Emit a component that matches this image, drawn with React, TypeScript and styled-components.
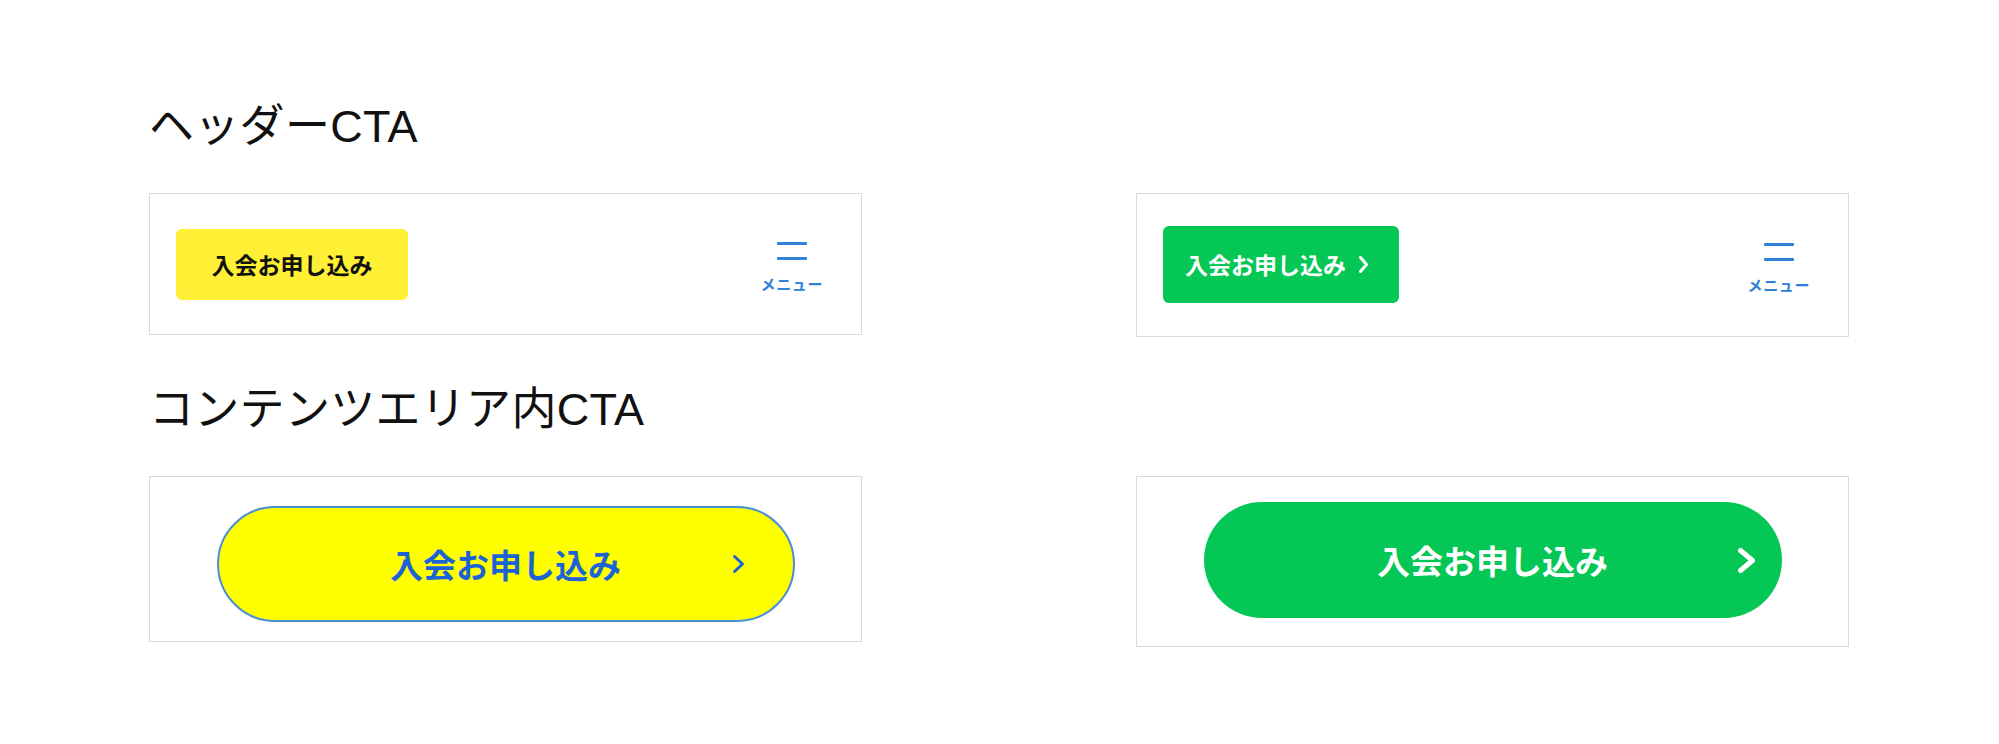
import React from "react";
import styled, { createGlobalStyle } from "styled-components";

const GlobalStyle = createGlobalStyle`
  html, body {
    margin: 0;
    padding: 0;
    background: #ffffff;
  }
  body {
    font-family: "Liberation Sans", "Noto Sans CJK JP", sans-serif;
    color: #111111;
  }
`;

const Page = styled.div`
  padding: 104px 0 0 149px;
  display: flex;
  flex-direction: column;
  gap: 50px;
`;

const Section = styled.section`
  display: flex;
  flex-direction: column;
`;

const Title = styled.h2`
  margin: 0 0 44px;
  font-family: "Liberation Sans", "Noto Sans CJK JP", sans-serif;
  font-weight: 400;
  font-size: 45px;
  line-height: 45px;
  letter-spacing: 0.3px;
  color: #111111;
`;

const Row = styled.div`
  display: grid;
  grid-template-columns: 713px 713px;
  column-gap: 274px;
  align-items: start;
`;

const HeaderBox = styled.div<{ $h: number }>`
  box-sizing: border-box;
  height: ${(p) => p.$h}px;
  border: 1px solid #dadada;
  background: #fff;
  display: flex;
  align-items: center;
  justify-content: space-between;
  padding: 0 38px 0 26px;
`;

const ContentBox = styled.div<{ $h: number; $pt: number }>`
  box-sizing: border-box;
  height: ${(p) => p.$h}px;
  border: 1px solid #dadada;
  background: #fff;
  display: flex;
  justify-content: center;
  align-items: flex-start;
  padding-top: ${(p) => p.$pt}px;
`;

const HeaderButton = styled.a<{ $variant: "yellow" | "green" }>`
  box-sizing: border-box;
  display: flex;
  align-items: center;
  justify-content: center;
  gap: 12px;
  width: ${(p) => (p.$variant === "yellow" ? 232 : 236)}px;
  height: ${(p) => (p.$variant === "yellow" ? 71 : 77)}px;
  padding-right: ${(p) => (p.$variant === "green" ? 8 : 0)}px;
  border-radius: 6px;
  background: ${(p) => (p.$variant === "yellow" ? "#ffef35" : "#05c755")};
  color: ${(p) => (p.$variant === "yellow" ? "#111111" : "#ffffff")};
  font-family: "Noto Sans CJK JP", sans-serif;
  font-weight: 700;
  font-size: 23px;
  line-height: 1;
  text-decoration: none;
  margin-top: ${(p) => (p.$variant === "green" ? -2 : 0)}px;
`;

const Menu = styled.div`
  display: flex;
  flex-direction: column;
  align-items: center;
  margin-top: 5px;
  color: #2f80d8;
`;

const Burger = styled.div`
  display: flex;
  flex-direction: column;
  gap: 12px;
  margin-bottom: 16px;
`;

const BurgerLine = styled.span`
  display: block;
  width: 30px;
  height: 3px;
  border-radius: 1px;
  background: #2f80d8;
`;

const MenuLabel = styled.span`
  font-family: "Noto Sans CJK JP", sans-serif;
  font-weight: 700;
  font-size: 15px;
  line-height: 15px;
  letter-spacing: 0.6px;
  color: #2f80d8;
`;

const Pill = styled.a<{ $variant: "yellow" | "green" }>`
  box-sizing: border-box;
  width: 578px;
  height: 116px;
  border-radius: 58px;
  display: grid;
  grid-template-columns: 1fr auto 1fr;
  align-items: center;
  background: ${(p) => (p.$variant === "yellow" ? "#ffff00" : "#05c755")};
  border: ${(p) => (p.$variant === "yellow" ? "2px solid #4a8fd6" : "none")};
  color: ${(p) => (p.$variant === "yellow" ? "#1b63d6" : "#ffffff")};
  font-family: "Noto Sans CJK JP", sans-serif;
  font-weight: 700;
  font-size: 33px;
  line-height: 1;
  text-decoration: none;
`;

const PillText = styled.span`
  grid-column: 2;
`;

const PillArrow = styled.span<{ $right: number }>`
  grid-column: 3;
  justify-self: end;
  display: flex;
  margin-right: ${(p) => p.$right}px;
`;

const Chevron = ({
  w,
  h,
  sw,
  color,
}: {
  w: number;
  h: number;
  sw: number;
  color: string;
}) => (
  <svg width={w} height={h} viewBox={`0 0 ${w} ${h}`} fill="none">
    <polyline
      points={`${sw / 2 + 1},${sw / 2 + 1} ${w - sw / 2 - 1},${h / 2} ${sw / 2 + 1},${h - sw / 2 - 1}`}
      stroke={color}
      strokeWidth={sw}
      strokeLinecap="round"
      strokeLinejoin="round"
    />
  </svg>
);

const MenuIcon = () => (
  <Menu>
    <Burger>
      <BurgerLine />
      <BurgerLine />
    </Burger>
    <MenuLabel>メニュー</MenuLabel>
  </Menu>
);

export default function App() {
  return (
    <>
      <GlobalStyle />
      <Page>
        <Section>
          <Title>ヘッダーCTA</Title>
          <Row>
            <HeaderBox $h={142}>
              <HeaderButton $variant="yellow">入会お申し込み</HeaderButton>
              <MenuIcon />
            </HeaderBox>
            <HeaderBox $h={144}>
              <HeaderButton $variant="green">
                入会お申し込み
                <Chevron w={11} h={19} sw={3} color="#ffffff" />
              </HeaderButton>
              <MenuIcon />
            </HeaderBox>
          </Row>
        </Section>
        <Section>
          <Title>コンテンツエリア内CTA</Title>
          <Row>
            <ContentBox $h={166} $pt={29}>
              <Pill $variant="yellow">
                <PillText>入会お申し込み</PillText>
                <PillArrow $right={48}>
                  <Chevron w={13} h={20} sw={3} color="#1b63d6" />
                </PillArrow>
              </Pill>
            </ContentBox>
            <ContentBox $h={171} $pt={25}>
              <Pill $variant="green">
                <PillText>入会お申し込み</PillText>
                <PillArrow $right={26}>
                  <Chevron w={19} h={27} sw={5} color="#ffffff" />
                </PillArrow>
              </Pill>
            </ContentBox>
          </Row>
        </Section>
      </Page>
    </>
  );
}
